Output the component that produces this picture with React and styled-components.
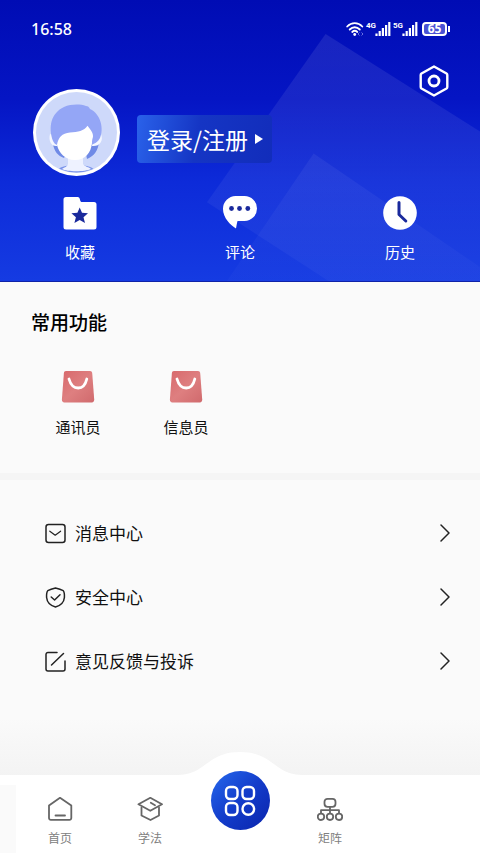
import React from 'react';
import styled, { createGlobalStyle } from 'styled-components';

const color = {
    page: '#fafafa',
    white: '#ffffff',
    text: '#101010',
    textMuted: '#808080',
    icon: '#666666',
    divider: '#f5f5f5',
    navy: '#1a2a9c'
};

const fontStack = '"Noto Sans CJK SC", "Noto Sans", sans-serif';

const FolderStar = () => (
    <svg width="34" height="34" viewBox="0 0 34 34" aria-hidden="true">
        <path d="M3 1h11.500c1.500 0 2 .7 2.300 2l.5 1.800c.3.900.8 1.200 1.700 1.200H31a2.500 2.500 0 0 1 2.500 2.500V31a2.500 2.500 0 0 1-2.500 2.500H3A2.500 2.500 0 0 1 .5 31V3.500A2.500 2.500 0 0 1 3 1z" fill="#fff" />
        <path d="M16.700 11.500l2.300 5.300 6 .5-4.500 3.900 1.500 5.900-5.300-3.100-5.300 3.100 1.500-5.900-4.500-3.900 6-.5z" fill={color.navy} />
    </svg>
);

const Bubble = () => (
    <svg width="34" height="34" viewBox="0 0 34 34" aria-hidden="true">
        <path d="M13 0h8.500a12.500 12.500 0 0 1 0 25H14.500c-.6 2-1 5-1.500 7.500C7.500 29 0 22 0 13A12.800 12.800 0 0 1 13 0z" fill="#fff" />
        <circle cx="8.500" cy="12.500" r="2.400" fill={color.navy} />
        <circle cx="16.500" cy="12.500" r="2.400" fill={color.navy} />
        <circle cx="24.800" cy="12.500" r="2.400" fill={color.navy} />
    </svg>
);

const Clock = () => (
    <svg width="34" height="34" viewBox="0 0 34 34" aria-hidden="true">
        <circle cx="17" cy="17" r="16.800" fill="#fff" />
        <path d="M16 6.500V18.500L22.800 25" fill="none" stroke={color.navy} strokeWidth="3" strokeLinecap="round" strokeLinejoin="round" />
    </svg>
);

const Bag = () => (
    <svg width="34" height="34" viewBox="0 0 34 34" aria-hidden="true">
        <defs>
            <linearGradient id="bag" x1="0" y1="0" x2="1" y2="1">
                <stop offset="0" stopColor="#d8696c" />
                <stop offset="0.5" stopColor="#de7f80" />
                <stop offset="1" stopColor="#d06a6d" />
            </linearGradient>
        </defs>
        <path d="M5 1h24c1.300 0 2 .7 2.200 2l2 26.500c.1 1.800-.8 2.900-2.400 2.900H3.300c-1.600 0-2.500-1.100-2.400-2.900L2.900 3C3 1.700 3.700 1 5 1z" fill="url(#bag)" />
        <path d="M8 9c1.500 5.500 5 9 9.200 9s7.300-3.500 8.600-9" fill="none" stroke="#fff" strokeWidth="2.800" strokeLinecap="round" />
    </svg>
);

const Message = () => (
    <svg width="21" height="21" viewBox="0 0 21 21" aria-hidden="true">
        <rect x="1" y="1.500" width="19" height="18" rx="2.500" />
        <path d="M4.800 8.200L10.200 12.200L15.600 8.200" strokeWidth="1.200" />
    </svg>
);

const Shield = () => (
    <svg width="21" height="21" viewBox="0 0 21 21" aria-hidden="true">
        <path d="M10.500 1C13 1.600 16 2.500 18.200 3.600C19.300 5 19.600 7.500 19.400 10.500C19 14.500 16 18.500 10.500 20C5 18.500 2 14.500 1.600 10.500C1.400 7.500 1.700 5 2.800 3.600C5 2.500 8 1.600 10.500 1z" />
        <path d="M6.200 10L9.600 13L15 7.800" />
    </svg>
);

const Feedback = () => (
    <svg width="21" height="21" viewBox="0 0 21 21" aria-hidden="true">
        <path d="M12 1.500H3A2 2 0 0 0 1 3.500V18a2 2 0 0 0 2 2H18a2 2 0 0 0 2-2V10" />
        <path d="M6.500 14L18.500 2.500" />
    </svg>
);

const Home = () => (
    <svg width="26" height="26" viewBox="0 0 26 26" aria-hidden="true">
        <path d="M2 9.500L13 1.800L24.300 9.500V22a1.800 1.800 0 0 1-1.800 1.800H3.800A1.800 1.800 0 0 1 2 22z" />
        <path d="M8.500 19.500H18" />
    </svg>
);

const Study = () => (
    <svg width="26" height="26" viewBox="0 0 26 26" aria-hidden="true">
        <path d="M13.300 1.800L25 8.300L13.300 14.800L1.500 8.300z" />
        <path d="M4.500 11.500V19.500L13.500 24L22 19.500V11.500" />
        <path d="M13.800 6.800L18 9.300" />
    </svg>
);

const Matrix = () => (
    <svg width="26" height="26" viewBox="0 0 26 26" aria-hidden="true">
        <rect x="7.500" y="2.800" width="11" height="8" rx="3" />
        <path d="M13 11V17M4 17V14.200H22V17" />
        <circle cx="4" cy="20.800" r="3.200" />
        <circle cx="13" cy="20.800" r="3.200" />
        <circle cx="22" cy="20.800" r="3.200" />
    </svg>
);

const Avatar = () => (
    <svg width="87" height="87" viewBox="0 0 87 87" role="img" aria-label="头像">
        <defs>
            <clipPath id="face">
                <circle cx="43.500" cy="43.500" r="40" />
            </clipPath>
        </defs>
        <circle cx="43.500" cy="43.500" r="43.500" fill="#fff" />
        <circle cx="43.500" cy="43.500" r="40.500" fill="#ced9fa" />
        <g clipPath="url(#face)">
            <path d="M20 55C21 62 25 67 31 69L36 60L23 54zM66 53C65 62 61 67 54 70L52 60L61 54z" fill="#6f8ae6" />
            <path d="M24 81C28 77 34 77 37 76H49C53 77 58 77 62 81L50 87H36z" fill="#7a93ea" />
            <path d="M35 68H50V75C52 78 56 78 58 80C52 83 34 83 29 80C32 78 34 78 35 75z" fill="#eef2ff" />
            <path d="M17 45C15 52 19 58 24 57L25 48zM68 45C71 52 66 58 59 57L60 48z" fill="#f4f7ff" />
            <path d="M20 52C15 38 18 24 31 18C38 15 47 15 53 17C55 17 56 18 57 20C68 25 71 40 67 49C65 53 61 55 58 56H24C22 55 21 54 20 52z" fill="#94a6f6" />
            <path d="M24 56C25 49 29 44 37 43.500C45 43 51 42 54.500 36.700C57 40 60 43 60 47C60 49 59 50 59 54C58 64 52 71 42 71C32 71 26 64 24 56z" fill="#fff" />
        </g>
    </svg>
);

const Wifi = () => (
    <svg width="18" height="14" viewBox="0 0 18 14" aria-hidden="true">
        <g fill="none" stroke="#fff" strokeWidth="1.800" strokeLinecap="round">
            <path d="M1.200 4.500C5.500 0 12 0 16.300 4.500" />
            <path d="M3.700 7.500C6.700 4.500 10.800 4.500 13.800 7.500" />
            <path d="M6.200 10C7.800 8.500 9.700 8.500 11.300 10" />
        </g>
        <circle cx="8.700" cy="12.500" r="1.400" fill="#fff" />
        <path d="M13.500 10.500l-1.500 1.500 1.500 1.500M15.500 10.500l1.500 1.500-1.500 1.500" fill="none" stroke="#6a72e0" />
    </svg>
);

const Bars = () => (
    <svg width="16" height="14" viewBox="0 0 16 14" aria-hidden="true">
        <path d="M1.500 11.500V14M4.700 9V14M7.900 6V14M11.100 3V14M14.300 0V14" stroke="#fff" strokeWidth="2.200" />
    </svg>
);

const shortcuts = [
    { label: '收藏', icon: FolderStar },
    { label: '评论', icon: Bubble },
    { label: '历史', icon: Clock }
];

const features = [ '通讯员', '信息员' ];

const menu = [
    { label: '消息中心', icon: Message, path: 'message' },
    { label: '安全中心', icon: Shield, path: 'security' },
    { label: '意见反馈与投诉', icon: Feedback, path: 'feedback' }
];

const App = () => {
    const renderTab = (label, Icon, path) => (
        <Tab href={`#${ path }`}>
            <Icon />
            {label}
        </Tab>
    );

    return (
        <>
            <GlobalStyle />
            <Page>
                <Header>
                    <Backdrop viewBox="0 0 274 282" aria-hidden="true">
                        <defs>
                            <linearGradient id="fade" x1="0" y1="0" x2="0" y2="1">
                                <stop offset="0" stopColor="#fff" stopOpacity="0.090" />
                                <stop offset="1" stopColor="#fff" stopOpacity="0.030" />
                            </linearGradient>
                        </defs>
                        <path d="M119 34L274 132V282H122L0 203z" fill="url(#fade)" />
                        <path d="M107 154L274 268V282H20z" fill="url(#fade)" fillOpacity="0.600" />
                    </Backdrop>
                    <StatusBar>
                        <Time>16:58</Time>
                        <StatusIcons>
                            <Wifi />
                            <Signal><small>4G</small><Bars /></Signal>
                            <Signal><small>5G</small><Bars /></Signal>
                            <Battery>65</Battery>
                        </StatusIcons>
                    </StatusBar>
                    <Profile>
                        <User>
                            <Avatar />
                            <LoginButton type="button">
                                登录/注册
                                <svg width="8" height="12" viewBox="0 0 8 12" aria-hidden="true">
                                    <path d="M0 1L8 6L0 11z" fill="#fff" />
                                </svg>
                            </LoginButton>
                        </User>
                        <IconButton type="button" aria-label="设置">
                            <svg width="32" height="32" viewBox="0 0 32 32" fill="none" stroke="#fff" strokeLinejoin="round">
                                <path d="M16 1.500L28.500 8.500Q29.300 9 29.300 10V22Q29.300 23 28.500 23.500L16 30.500L3.500 23.500Q2.700 23 2.700 22V10Q2.700 9 3.500 8.500z" strokeWidth="2.400" />
                                <circle cx="16" cy="16" r="5" strokeWidth="2.800" />
                            </svg>
                        </IconButton>
                    </Profile>
                    <Shortcuts>
                        {shortcuts.map(({ label, icon: Icon }) => (
                            <Shortcut key={label} type="button">
                                <Icon />
                                {label}
                            </Shortcut>
                        ))}
                    </Shortcuts>
                </Header>
                <Features>
                    <Title>常用功能</Title>
                    <FeatureList>
                        {features.map((label) => (
                            <Feature key={label} type="button">
                                <Bag />
                                {label}
                            </Feature>
                        ))}
                    </FeatureList>
                </Features>
                <Menu>
                    {menu.map(({ label, icon: Icon, path }) => (
                        <MenuItem key={path} href={`#${ path }`}>
                            <Icon />
                            <MenuText>{label}</MenuText>
                            <Chevron viewBox="0 0 12 20" aria-hidden="true">
                                <path d="M2 2L10 10L2 18" />
                            </Chevron>
                        </MenuItem>
                    ))}
                </Menu>
                <TabBar>
                    <Hump viewBox="0 0 130 24" aria-hidden="true">
                        <path d="M0 24C18 24 24 18 34 11C44 4 52 1 65 1C78 1 86 4 96 11C106 18 112 24 130 24z" fill="#fff" />
                    </Hump>
                    {renderTab('首页', Home, 'home')}
                    {renderTab('学法', Study, 'study')}
                    <CenterButton type="button" aria-label="应用">
                        <svg width="32" height="32" viewBox="0 0 32 32" fill="none" stroke="#fff" strokeWidth="2.400">
                            <rect x="2" y="2" width="11.500" height="12" rx="4" />
                            <rect x="18.500" y="2" width="11.500" height="12" rx="4" />
                            <rect x="2" y="18" width="11.500" height="12" rx="4" />
                            <circle cx="24.300" cy="24" r="5.800" />
                        </svg>
                    </CenterButton>
                    {renderTab('矩阵', Matrix, 'matrix')}
                </TabBar>
            </Page>
        </>
    );
};

const GlobalStyle = createGlobalStyle`
    * {
        box-sizing: border-box;
    }
    body {
        margin: 0;
        background: ${ color.page };
        color: ${ color.text };
        font-family: ${ fontStack };
    }
    button {
        padding: 0;
        border: 0;
        background: none;
        color: inherit;
        font-family: inherit;
        cursor: pointer;
    }
    a {
        color: inherit;
        text-decoration: none;
    }
    svg {
        display: block;
        flex-shrink: 0;
    }
`;

const Page = styled.div`
    display: flex;
    flex-direction: column;
    min-height: 100vh;
    background: linear-gradient(to top, #f3f3f3 75px, ${ color.page } 135px);
`;

const Header = styled.header`
    position: relative;
    overflow: hidden;
    padding-bottom: 17px;
    border-bottom: 1px solid #0f22a8;
    background: linear-gradient(#000cb4, #0515c4 35%, #0d2bd9 65%, #153be2);
    color: ${ color.white };
`;

const Backdrop = styled.svg`
    position: absolute;
    top: 0;
    right: 0;
    height: 100%;
`;

const StatusBar = styled.div`
    position: relative;
    display: flex;
    align-items: center;
    justify-content: space-between;
    height: 58px;
    padding: 0 30px 0 31px;
`;

const Time = styled.div`
    font: 500 16px "Noto Sans", sans-serif;
`;

const StatusIcons = styled.div`
    display: flex;
    align-items: center;
    gap: 2px;
`;

const Signal = styled.div`
    display: flex;
    align-items: flex-start;
    small {
        width: 9px;
        font: 700 8px/8px "Roboto", sans-serif;
    }
`;

const Battery = styled.div`
    position: relative;
    width: 25px;
    margin: 0 3px 0 2px;
    border: 2px solid ${ color.white };
    border-radius: 4px;
    background: #4a52d4;
    font: 700 12px/10px "Noto Sans", sans-serif;
    text-align: center;
    &::after {
        content: '';
        position: absolute;
        top: 2px;
        right: -5px;
        width: 2px;
        height: 6px;
        background: ${ color.white };
    }
`;

const Profile = styled.div`
    position: relative;
    display: flex;
    align-items: flex-start;
    justify-content: space-between;
    padding: 7px 30px 0 33px;
`;

const User = styled.div`
    display: flex;
    align-items: center;
    gap: 17px;
    padding-top: 24px;
`;

const LoginButton = styled.button`
    display: flex;
    align-items: center;
    gap: 7px;
    height: 48px;
    margin-top: 12px;
    padding: 0 9px 0 10px;
    border-radius: 4px;
    background: linear-gradient(100deg, #2a62ea, #1535c4 45%, #122dbb);
    font-size: 23px;
    line-height: 32px;
    white-space: nowrap;
`;

const IconButton = styled.button`
    width: 32px;
    height: 32px;
`;

const Shortcuts = styled.div`
    position: relative;
    display: grid;
    grid-template-columns: repeat(3, 1fr);
    padding-top: 20px;
`;

const Shortcut = styled.button`
    display: flex;
    flex-direction: column;
    align-items: center;
    gap: 10px;
    font-size: 15px;
    line-height: 24px;
`;

const Features = styled.section`
    padding: 26px 24px 35px;
    border-bottom: 7px solid ${ color.divider };
`;

const Title = styled.h2`
    margin: 0 7px 34px;
    font-size: 19px;
    font-weight: 500;
    line-height: 28px;
    color: #000;
`;

const FeatureList = styled.div`
    display: flex;
`;

const Feature = styled.button`
    display: flex;
    flex-direction: column;
    align-items: center;
    gap: 12px;
    width: 108px;
    font-size: 15px;
    line-height: 22px;
`;

const Menu = styled.nav`
    flex: 1;
    padding-top: 21px;
`;

const MenuItem = styled.a`
    display: flex;
    align-items: center;
    gap: 9px;
    height: 64px;
    padding: 0 29px 0 45px;
    font-size: 17px;
    line-height: 24px;
    svg {
        fill: none;
        stroke: #222;
        stroke-width: 1.5;
        stroke-linecap: round;
        stroke-linejoin: round;
    }
`;

const MenuText = styled.span`
    flex: 1;
`;

const Chevron = styled.svg`
    width: 12px;
    height: 20px;
`;

const TabBar = styled.nav`
    position: relative;
    display: grid;
    grid-template-columns: repeat(5, 1fr);
    align-items: start;
    padding: 0 15px;
    background: linear-gradient(${ color.page }, ${ color.page }) 0 10px / 16px 100% no-repeat ${ color.white };
`;

const Hump = styled.svg`
    position: absolute;
    bottom: 100%;
    left: 50%;
    width: 130px;
    height: 24px;
    transform: translateX(-50%);
`;

const Tab = styled.a`
    display: flex;
    flex-direction: column;
    align-items: center;
    gap: 8px;
    padding: 21px 0 7px;
    font-size: 12px;
    line-height: 16px;
    color: ${ color.textMuted };
    svg {
        fill: none;
        stroke: ${ color.icon };
        stroke-width: 1.8;
        stroke-linecap: round;
        stroke-linejoin: round;
    }
`;

const CenterButton = styled.button`
    position: relative;
    display: flex;
    align-items: center;
    justify-content: center;
    justify-self: center;
    width: 59px;
    height: 59px;
    margin-top: -4px;
    border-radius: 50%;
    background: linear-gradient(135deg, #2260e6 10%, #133cca 50%, #0a24ac);
`;

export default App;
